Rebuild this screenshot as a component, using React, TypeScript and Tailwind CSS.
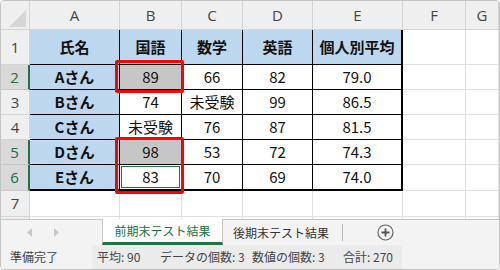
import React from 'react';

const FONT = { fontFamily: '"Noto Sans CJK JP", "Noto Sans", sans-serif' };
const LATIN = { fontFamily: '"Open Sans", "Noto Sans", sans-serif' };

const colLetters = ['A', 'B', 'C', 'D', 'E', 'F', 'G'];

const data = [
  ['氏名', '国語', '数学', '英語', '個人別平均'],
  ['Aさん', '89', '66', '82', '79.0'],
  ['Bさん', '74', '未受験', '99', '86.5'],
  ['Cさん', '未受験', '76', '87', '81.5'],
  ['Dさん', '98', '53', '72', '74.3'],
  ['Eさん', '83', '70', '69', '74.0'],
];

const selectedRows = [2, 5, 6];

function CornerCell() {
  return (
    <div className="relative bg-[#efefef] border-r border-b border-[#d4d4d4]">
      <svg className="absolute left-0 top-0" width="29" height="29" viewBox="0 0 29 29">
        <polygon points="8,26 25,26 25,9" fill="#d6d6d6" />
      </svg>
    </div>
  );
}

function ColHeader({ letter }: { letter: string }) {
  return (
    <div
      className="flex items-center justify-center bg-[#efefef] border-r border-b border-[#d4d4d4] text-[15px] leading-normal text-[#444]"
      style={LATIN}
    >
      {letter}
    </div>
  );
}

function RowHeader({ n }: { n: number }) {
  const sel = selectedRows.includes(n);
  return (
    <div
      className={
        sel
          ? 'flex items-center justify-center bg-[#d9d9d9] border-b border-[#c8c8c8] border-r-2 border-r-[#217346] text-[15px] leading-normal text-[#1e6b43]'
          : 'flex items-center justify-center bg-[#efefef] border-b border-r border-[#d4d4d4] text-[15px] leading-normal text-[#444]'
      }
      style={LATIN}
    >
      {n}
    </div>
  );
}

function TableCell({ row, col, text }: { row: number; col: number; text: string }) {
  const isHead = row === 1 || col === 0;
  const isGray = col === 1 && (row === 2 || row === 5);
  const isActive = col === 1 && row === 6;
  const bg = isHead ? 'bg-[#bdd7ee]' : isGray ? 'bg-[#c6c6c6]' : 'bg-white';
  const right = col === 4 ? 'border-r-2' : 'border-r';
  const bottom = row === 6 ? 'border-b-2' : 'border-b';
  const weight = isHead ? 'font-bold' : 'font-normal';
  return (
    <div className={`flex items-stretch border-black text-[15px] leading-normal text-[#111] ${bg} ${right} ${bottom} ${weight}`}>
      <div
        className={
          isActive
            ? 'flex-1 m-[1px] flex items-center justify-center border border-[#217346]'
            : 'flex-1 flex items-center justify-center whitespace-nowrap'
        }
      >
        {text}
      </div>
    </div>
  );
}

function BlankCell() {
  return <div className="bg-white border-r border-b border-[#e1e1e1]" />;
}

function SheetGrid() {
  const cells: React.ReactNode[] = [];
  cells.push(<CornerCell key="corner" />);
  colLetters.forEach(l => cells.push(<ColHeader key={`h-${l}`} letter={l} />));

  for (let r = 1; r <= 8; r++) {
    cells.push(<RowHeader key={`r-${r}`} n={r} />);
    for (let c = 0; c < 7; c++) {
      if (r <= 6 && c <= 4) {
        cells.push(<TableCell key={`${r}-${c}`} row={r} col={c} text={data[r - 1][c]} />);
      } else {
        cells.push(<BlankCell key={`${r}-${c}`} />);
      }
    }
  }

  return (
    <div className="relative h-[218px] overflow-hidden">
      <div className="grid grid-cols-[29px_90px_62px_61px_70px_90px_63px_1fr] grid-rows-[29px_35px_25px_25px_25px_25px_26px_26px_25px]">
        {cells}
      </div>
      {/* red highlight boxes */}
      <div className="absolute left-[114px] top-[59px] w-[69px] h-[33px] border-[3px] border-[#ff0000] rounded-[2px]" />
      <div className="absolute left-[114px] top-[136px] w-[69px] h-[57px] border-[3px] border-[#ff0000] rounded-[2px]" />
    </div>
  );
}

function TabBar() {
  return (
    <div className="flex h-[26px] bg-[#f3f3f3] border-t border-[#c6c6c6] whitespace-nowrap">
      <div className="w-[101px] flex items-center pl-[26px] gap-[20px]">
        <svg width="6" height="9" viewBox="0 0 6 9">
          <polygon points="5,0 5,9 0,4.5" fill="#c8c8c8" />
        </svg>
        <svg width="6" height="9" viewBox="0 0 6 9">
          <polygon points="1,0 1,9 6,4.5" fill="#c8c8c8" />
        </svg>
      </div>
      <div className="w-[121px] bg-white border-l border-r border-[#c6c6c6] border-b-[3px] border-b-[#217346] flex items-center justify-center text-[12px] leading-normal text-[#217346] -mt-[1px]">
        前期末テスト結果
      </div>
      <div className="flex items-center pl-[10px] pr-[13px] text-[12px] leading-normal text-[#333]">
        後期末テスト結果
      </div>
      <div className="w-px h-[17px] self-center bg-[#b8b8b8]" />
      <div className="flex items-center pl-[34px]">
        <svg width="17" height="17" viewBox="0 0 17 17">
          <circle cx="8.5" cy="8.5" r="7.5" fill="none" stroke="#666" strokeWidth="1.2" />
          <line x1="8.5" y1="4.5" x2="8.5" y2="12.5" stroke="#555" strokeWidth="1.8" />
          <line x1="4.5" y1="8.5" x2="12.5" y2="8.5" stroke="#555" strokeWidth="1.8" />
        </svg>
      </div>
    </div>
  );
}

function StatusBar() {
  return (
    <div className="flex h-[24px] bg-[#f3f3f3] text-[12px] leading-normal text-[#444] whitespace-nowrap">
      <div className="w-[91px] flex items-center pl-[9px]">準備完了</div>
      <div className="w-[310px] flex items-center pl-[5px] bg-[#ebebeb]">
        <span className="w-[63px]">平均: 90</span>
        <span className="w-[92px]">データの個数: 3</span>
        <span className="w-[91px]">数値の個数: 3</span>
        <span>合計: 270</span>
      </div>
    </div>
  );
}

export default function App() {
  return (
    <div className="w-[500px] h-[270px] bg-white">
      <div
        className="w-[500px] h-[270px] border border-[#c4c4c4] rounded-[4px] overflow-hidden flex flex-col bg-white"
        style={FONT}
      >
        <SheetGrid />
        <TabBar />
        <StatusBar />
      </div>
    </div>
  );
}
